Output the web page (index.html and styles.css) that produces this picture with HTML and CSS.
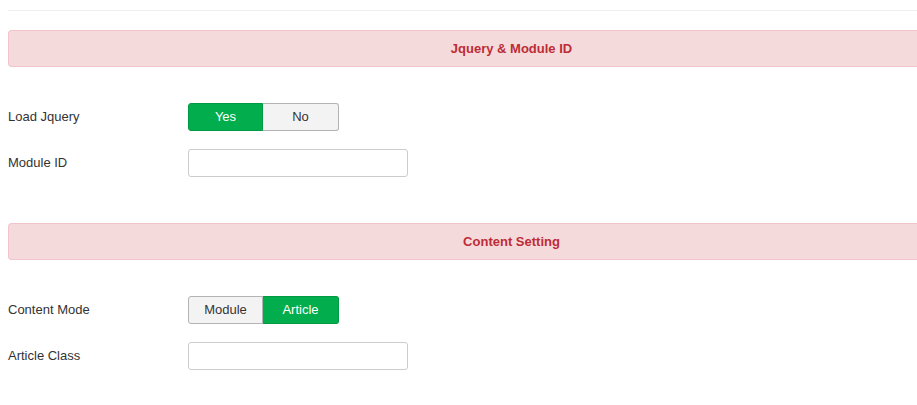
FILE: index.html
```html
<!DOCTYPE html>
<html>
<head>
<meta charset="utf-8">
<link rel="stylesheet" href="styles.css">
</head>
<body>
<div class="page">
  <hr class="rule">
  <div class="alert">Jquery &amp; Module ID</div>
  <div class="form">
    <div class="control-group">
      <label class="control-label">Load Jquery</label>
      <div class="btn-group">
        <span class="btn active">Yes</span><span class="btn">No</span>
      </div>
    </div>
    <div class="control-group">
      <label class="control-label">Module ID</label>
      <input class="input" type="text">
    </div>
  </div>
  <div class="alert alert-second">Content Setting</div>
  <div class="form">
    <div class="control-group">
      <label class="control-label">Content Mode</label>
      <div class="btn-group">
        <span class="btn">Module</span><span class="btn active">Article</span>
      </div>
    </div>
    <div class="control-group">
      <label class="control-label">Article Class</label>
      <input class="input" type="text">
    </div>
  </div>
</div>
</body>
</html>
```
FILE: styles.css
```css
html, body {
  margin: 0;
  padding: 0;
  background: #fff;
}
body {
  font-family: "Helvetica Neue", "Liberation Sans", Arial, sans-serif;
  font-size: 13px;
  color: #333;
}
.page {
  padding: 10px 0 0 8px;
}
.rule {
  margin: 0 0 19px 0;
  border: 0;
  border-top: 1px solid #eeeeee;
  height: 0;
}
.alert {
  box-sizing: border-box;
  height: 37px;
  line-height: 35px;
  padding-left: 97px;
  background: #f5dadc;
  border: 1px solid #f0c4ca;
  border-right: 0;
  border-radius: 4px 0 0 4px;
  color: #bd2c36;
  font-weight: bold;
  text-align: center;
  font-size: 13px;
}
.alert-second {
  margin-top: 46px;
}
.form {
  padding-top: 36px;
}
.control-group {
  display: flex;
  align-items: center;
  margin-bottom: 18px;
  height: 28px;
}
.control-label {
  width: 180px;
  color: #333;
  position: relative;
  top: -1px;
}
.btn-group {
  display: flex;
}
.btn {
  box-sizing: border-box;
  width: 75px;
  height: 28px;
  line-height: 26px;
  text-align: center;
  background: #f3f3f3;
  border: 1px solid #b3b3b3;
  color: #333;
}
.btn:first-child {
  border-radius: 3px 0 0 3px;
}
.btn:last-child {
  width: 76px;
  border-left: 0;
  border-radius: 0 3px 3px 0;
}
.btn.active {
  background: #02ad4d;
  border-color: #019a44;
  color: #fff;
}
.input {
  box-sizing: border-box;
  width: 220px;
  height: 28px;
  margin: 0;
  border: 1px solid #cccccc;
  border-radius: 3px;
  background: #fff;
  padding: 4px 6px;
}
```
